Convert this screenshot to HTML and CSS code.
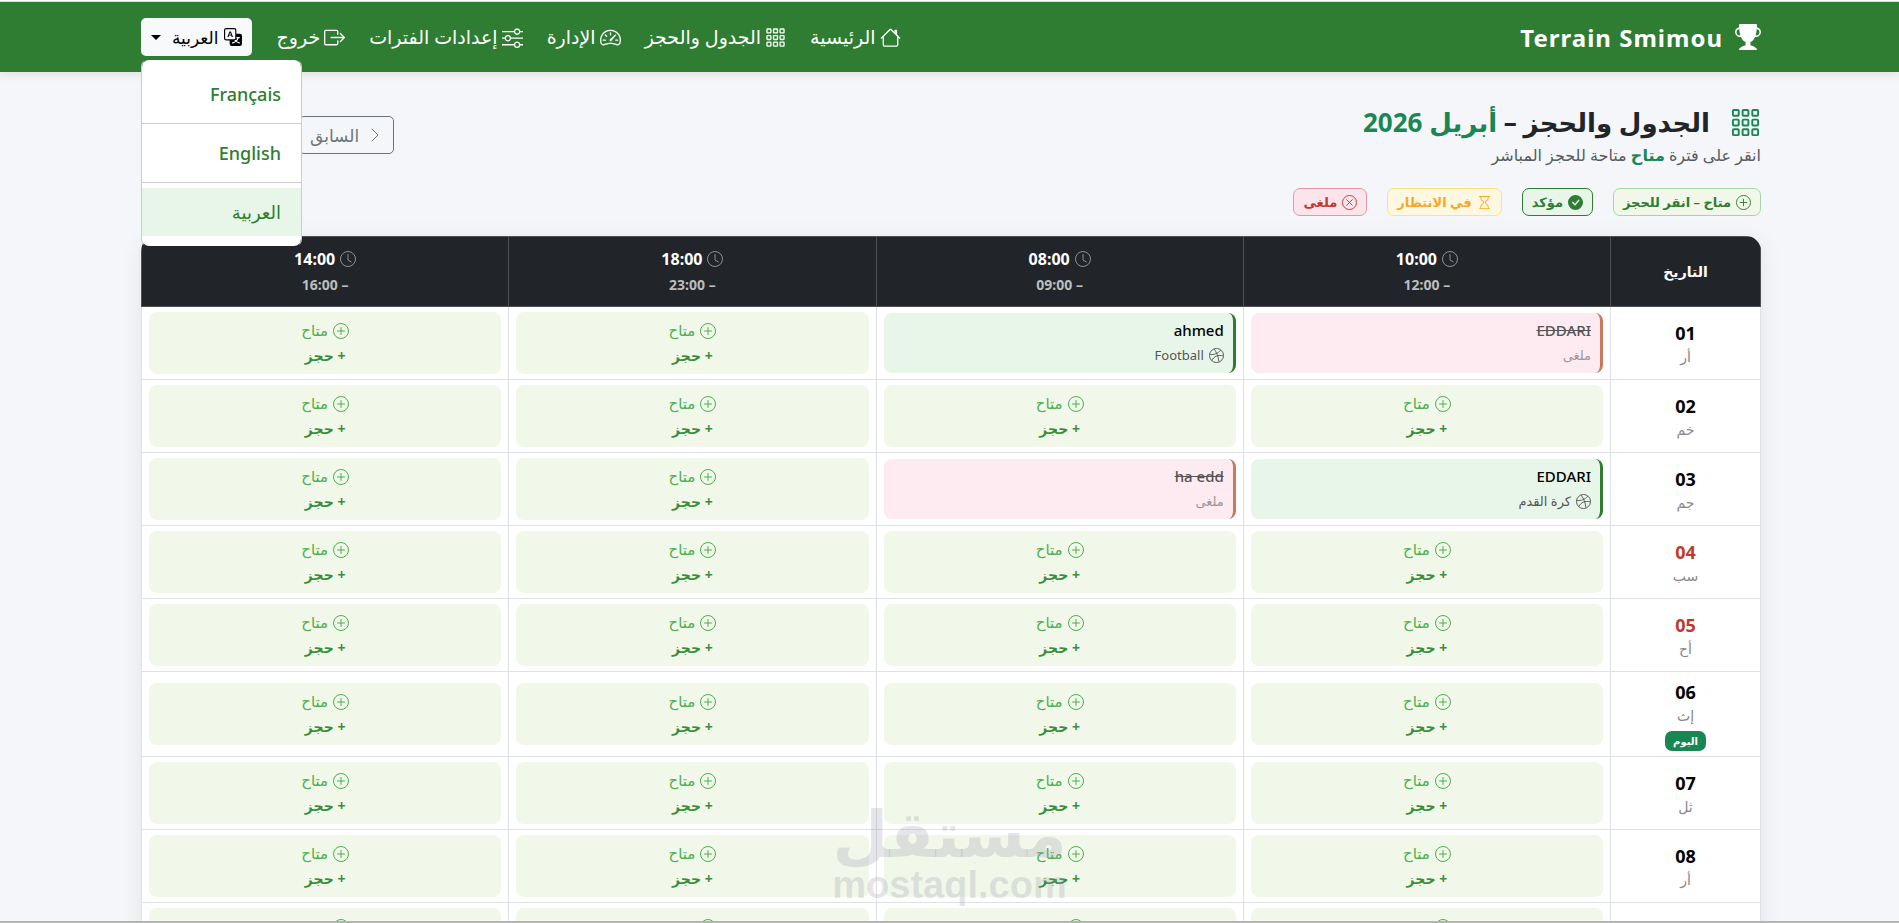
FILE: index.html
```html
<!DOCTYPE html>
<html lang="ar" dir="rtl">
<head>
    <meta charset="UTF-8">
    <meta name="viewport" content="width=device-width, initial-scale=1.0">
    <title>الجدول والحجز | Terrain Smimou</title>
    <link rel="stylesheet" href="styles.css">
</head>
<body>
    <!-- Icon set -->
    <svg class="sprite" aria-hidden="true">
        <symbol id="i-trophy" viewBox="0 0 16 16"><path d="M2.5.5A.5.5 0 0 1 3 0h10a.5.5 0 0 1 .5.5q0 .807-.034 1.536a3 3 0 1 1-1.133 5.89c-.79 1.865-1.878 2.777-2.833 3.011v2.173l1.425.356c.194.048.377.135.537.255L13.3 15.1a.5.5 0 0 1-.3.9H3a.5.5 0 0 1-.3-.9l1.838-1.379c.16-.12.343-.207.537-.255L6.5 13.11v-2.173c-.955-.234-2.043-1.146-2.833-3.012a3 3 0 1 1-1.132-5.89A33 33 0 0 1 2.5.5m.099 2.54a2 2 0 0 0 .72 3.935c-.333-1.05-.588-2.346-.72-3.935m10.083 3.935a2 2 0 0 0 .72-3.935c-.133 1.59-.388 2.885-.72 3.935"/></symbol>
        <symbol id="i-house" viewBox="0 0 16 16"><path fill-rule="evenodd" d="M8.707 1.5a1 1 0 0 0-1.414 0L.646 8.146a.5.5 0 0 0 .708.708L2 8.207V13.5A1.5 1.5 0 0 0 3.5 15h9a1.5 1.5 0 0 0 1.5-1.5V8.207l.646.647a.5.5 0 0 0 .708-.708L13 5.793V2.5a.5.5 0 0 0-.5-.5h-1a.5.5 0 0 0-.5.5v1.293zM13 7.207V13.5a.5.5 0 0 1-.5.5h-9a.5.5 0 0 1-.5-.5V7.207l5-5z"/></symbol>
        <symbol id="i-grid" viewBox="0 0 16 16">
            <g fill="none" stroke="currentColor">
                <rect x="1.5" y="1.5" width="3" height="3" rx=".5"/><rect x="6.5" y="1.5" width="3" height="3" rx=".5"/><rect x="11.5" y="1.5" width="3" height="3" rx=".5"/>
                <rect x="1.5" y="6.5" width="3" height="3" rx=".5"/><rect x="6.5" y="6.5" width="3" height="3" rx=".5"/><rect x="11.5" y="6.5" width="3" height="3" rx=".5"/>
                <rect x="1.5" y="11.5" width="3" height="3" rx=".5"/><rect x="6.5" y="11.5" width="3" height="3" rx=".5"/><rect x="11.5" y="11.5" width="3" height="3" rx=".5"/>
            </g>
        </symbol>
        <symbol id="i-speed" viewBox="0 0 16 16"><path d="M8 4a.5.5 0 0 1 .5.5V6a.5.5 0 0 1-1 0V4.5A.5.5 0 0 1 8 4M3.732 5.732a.5.5 0 0 1 .707 0l.915.914a.5.5 0 1 1-.708.708l-.914-.915a.5.5 0 0 1 0-.707M2 10a.5.5 0 0 1 .5-.5h1.586a.5.5 0 0 1 0 1H2.5A.5.5 0 0 1 2 10m9.5 0a.5.5 0 0 1 .5-.5h1.5a.5.5 0 0 1 0 1H12a.5.5 0 0 1-.5-.5m.754-4.246a.39.39 0 0 0-.527-.02L7.547 9.31a.91.91 0 1 0 1.302 1.258l3.434-4.297a.39.39 0 0 0-.029-.518z"/><path fill-rule="evenodd" d="M0 10a8 8 0 1 1 15.547 2.661c-.442 1.253-1.845 1.602-2.932 1.25C11.309 13.488 9.475 13 8 13c-1.474 0-3.31.488-4.615.911-1.087.352-2.49.003-2.932-1.25A8 8 0 0 1 0 10m8-7a7 7 0 0 0-6.603 9.329c.203.575.923.876 1.68.63C4.397 12.533 6.358 12 8 12s3.604.532 4.923.96c.757.245 1.477-.056 1.68-.631A7 7 0 0 0 8 3"/></symbol>
        <symbol id="i-sliders" viewBox="0 0 16 16"><path fill-rule="evenodd" d="M11.5 2a1.5 1.5 0 1 0 0 3 1.5 1.5 0 0 0 0-3M9.05 3a2.5 2.5 0 0 1 4.9 0H16v1h-2.05a2.5 2.5 0 0 1-4.9 0H0V3zM4.5 7a1.5 1.5 0 1 0 0 3 1.5 1.5 0 0 0 0-3M2.05 8a2.5 2.5 0 0 1 4.9 0H16v1H6.95a2.5 2.5 0 0 1-4.9 0H0V8zm9.45 4a1.5 1.5 0 1 0 0 3 1.5 1.5 0 0 0 0-3m-2.45 1a2.5 2.5 0 0 1 4.9 0H16v1h-2.05a2.5 2.5 0 0 1-4.9 0H0v-1z"/></symbol>
        <symbol id="i-exit" viewBox="0 0 16 16"><path d="M10 12.5a.5.5 0 0 1-.5.5h-8a.5.5 0 0 1-.5-.5v-9a.5.5 0 0 1 .5-.5h8a.5.5 0 0 1 .5.5v2a.5.5 0 0 0 1 0v-2A1.5 1.5 0 0 0 9.5 2h-8A1.5 1.5 0 0 0 0 3.5v9A1.5 1.5 0 0 0 1.5 14h8a1.5 1.5 0 0 0 1.5-1.5v-2a.5.5 0 0 0-1 0z"/><path d="M15.854 8.354a.5.5 0 0 0 0-.708l-3-3a.5.5 0 0 0-.708.708L14.293 7.5H5.5a.5.5 0 0 0 0 1h8.793l-2.147 2.146a.5.5 0 0 0 .708.708z"/></symbol>
        <symbol id="i-translate" viewBox="0 0 16 16"><path fill-rule="evenodd" d="M4.545 6.714 4.11 8H3l1.862-5h1.284L8 8H6.833l-.435-1.286zm1.634-.736L5.5 3.956h-.049l-.679 2.022z"/><path fill-rule="evenodd" d="M0 2a2 2 0 0 1 2-2h7a2 2 0 0 1 2 2v3h3a2 2 0 0 1 2 2v7a2 2 0 0 1-2 2H7a2 2 0 0 1-2-2v-3H2a2 2 0 0 1-2-2zm2-1a1 1 0 0 0-1 1v7a1 1 0 0 0 1 1h7a1 1 0 0 0 1-1V2a1 1 0 0 0-1-1z"/><path fill="none" stroke="#fff" stroke-width="1.1" d="M7.2 13.4c2.8-.7 4.7-2.2 5.5-4.8M14 13.5c-2.2-.5-3.5-1.5-4.3-2.8M11 8.5h3"/></symbol>
        <symbol id="i-plus" viewBox="0 0 16 16"><path fill="none" stroke="currentColor" stroke-linecap="round" d="M8 4.5v7M4.5 8h7"/><circle cx="8" cy="8" r="7.5" fill="none" stroke="currentColor"/></symbol>
        <symbol id="i-check" viewBox="0 0 16 16"><path fill-rule="evenodd" d="M16 8A8 8 0 1 1 0 8a8 8 0 0 1 16 0m-3.97-3.03a.75.75 0 0 0-1.08.022L7.477 9.417 5.384 7.323a.75.75 0 0 0-1.06 1.06L6.97 11.03a.75.75 0 0 0 1.079-.02l3.992-4.99a.75.75 0 0 0-.01-1.05z"/></symbol>
        <symbol id="i-glass" viewBox="0 0 16 16"><path fill-rule="evenodd" d="M2 1.5a.5.5 0 0 1 .5-.5h11a.5.5 0 0 1 0 1h-1v1a4.5 4.5 0 0 1-2.557 4.06c-.29.139-.443.377-.443.59v.7c0 .213.154.451.443.59A4.5 4.5 0 0 1 12.5 13v1h1a.5.5 0 0 1 0 1h-11a.5.5 0 1 1 0-1h1v-1a4.5 4.5 0 0 1 2.557-4.06c.29-.139.443-.377.443-.59v-.7c0-.213-.154-.451-.443-.59A4.5 4.5 0 0 1 3.5 3V2h-1a.5.5 0 0 1-.5-.5m2.5.5v1a3.5 3.5 0 0 0 1.989 3.158c.533.256 1.011.791 1.011 1.491v.702c0 .7-.478 1.235-1.011 1.491A3.5 3.5 0 0 0 4.5 13v1h7v-1a3.5 3.5 0 0 0-1.989-3.158C8.978 9.586 8.5 9.052 8.5 8.351v-.702c0-.7.478-1.235 1.011-1.491A3.5 3.5 0 0 0 11.5 3V2z"/></symbol>
        <symbol id="i-x" viewBox="0 0 16 16"><path fill="none" stroke="currentColor" stroke-linecap="round" d="m5 5 6 6M11 5l-6 6"/><circle cx="8" cy="8" r="7.5" fill="none" stroke="currentColor"/></symbol>
        <symbol id="i-clock" viewBox="0 0 16 16"><path fill="none" stroke="currentColor" stroke-linecap="round" d="M8 3.5V9l3.200 1.900"/><circle cx="8" cy="8" r="7.5" fill="none" stroke="currentColor"/></symbol>
        <symbol id="i-ball" viewBox="0 0 16 16"><g fill="none" stroke="currentColor"><circle cx="8" cy="8" r="7.5"/><path d="M5.3 1.1c2.9 3.600 4.600 7.800 5.300 13.400M.6 7c4.900.2 9-.9 11.900-4.700M3 13.400c2.200-4.400 6.400-6.500 12.400-5"/></g></symbol>
        <symbol id="i-chevron" viewBox="0 0 16 16"><path fill="none" stroke="currentColor" stroke-linecap="round" stroke-linejoin="round" d="m5 2 6 6-6 6"/></symbol>
    </svg>

    <div class="screen">
        <nav class="navbar">
            <div class="container navbar-inner">
                <a class="brand" href="#"><svg class="icon"><use href="#i-trophy"/></svg><span>Terrain Smimou</span></a>
                <div class="nav-links">
                    <a href="#"><svg class="icon"><use href="#i-house"/></svg>الرئيسية</a>
                    <a href="#"><svg class="icon"><use href="#i-grid"/></svg>الجدول والحجز</a>
                    <a href="#"><svg class="icon"><use href="#i-speed"/></svg>الإدارة</a>
                    <a href="#"><svg class="icon"><use href="#i-sliders"/></svg>إعدادات الفترات</a>
                    <a href="#"><svg class="icon"><use href="#i-exit"/></svg>خروج</a>
                    <div class="lang">
                        <button class="lang-btn" type="button" aria-expanded="true"><svg class="icon"><use href="#i-translate"/></svg>العربية<span class="caret"></span></button>
                        <div class="lang-menu">
                            <a href="#" lang="fr">Français</a>
                            <hr>
                            <a href="#" lang="en">English</a>
                            <hr>
                            <a href="#" class="active">العربية</a>
                        </div>
                    </div>
                </div>
            </div>
        </nav>

        <main class="container">
            <header class="page-head">
                <div>
                    <h1><svg class="icon"><use href="#i-grid"/></svg><span>الجدول والحجز – <span class="month">أبريل 2026</span></span></h1>
                    <p>انقر على فترة <strong>متاح</strong> متاحة للحجز المباشر</p>
                </div>
                <div class="month-nav">
                    <button type="button"><svg class="icon"><use href="#i-chevron"/></svg>السابق</button>
                    <button type="button" class="next" aria-label="التالي"><svg class="icon flip"><use href="#i-chevron"/></svg></button>
                </div>
            </header>

            <div class="legend">
                <span class="tag tag-free"><svg class="icon"><use href="#i-plus"/></svg>متاح – انقر للحجز</span>
                <span class="tag tag-ok"><svg class="icon"><use href="#i-check"/></svg>مؤكد</span>
                <span class="tag tag-wait"><svg class="icon"><use href="#i-glass"/></svg>في الانتظار</span>
                <span class="tag tag-off"><svg class="icon"><use href="#i-x"/></svg>ملغى</span>
            </div>

            <div class="table-wrap">
                <table>
                    <thead>
                        <tr>
                            <th class="col-date">التاريخ</th>
                            <th><div class="from"><svg class="icon"><use href="#i-clock"/></svg>10:00</div><div class="to">– 12:00</div></th>
                            <th><div class="from"><svg class="icon"><use href="#i-clock"/></svg>08:00</div><div class="to">– 09:00</div></th>
                            <th><div class="from"><svg class="icon"><use href="#i-clock"/></svg>18:00</div><div class="to">– 23:00</div></th>
                            <th><div class="from"><svg class="icon"><use href="#i-clock"/></svg>14:00</div><div class="to">– 16:00</div></th>
                        </tr>
                    </thead>
                    <tbody>
                        <tr>
                            <td class="date"><b>01</b><small>أر</small></td>
                            <td><div class="slot off"><b>EDDARI</b><small>ملغى</small></div></td>
                            <td><div class="slot ok"><b>ahmed</b><small><svg class="icon"><use href="#i-ball"/></svg>Football</small></div></td>
                            <td><a class="slot free" href="#"><span><svg class="icon"><use href="#i-plus"/></svg>متاح</span><b>+ حجز</b></a></td>
                            <td><a class="slot free" href="#"><span><svg class="icon"><use href="#i-plus"/></svg>متاح</span><b>+ حجز</b></a></td>
                        </tr>
                        <tr>
                            <td class="date"><b>02</b><small>خم</small></td>
                            <td><a class="slot free" href="#"><span><svg class="icon"><use href="#i-plus"/></svg>متاح</span><b>+ حجز</b></a></td>
                            <td><a class="slot free" href="#"><span><svg class="icon"><use href="#i-plus"/></svg>متاح</span><b>+ حجز</b></a></td>
                            <td><a class="slot free" href="#"><span><svg class="icon"><use href="#i-plus"/></svg>متاح</span><b>+ حجز</b></a></td>
                            <td><a class="slot free" href="#"><span><svg class="icon"><use href="#i-plus"/></svg>متاح</span><b>+ حجز</b></a></td>
                        </tr>
                        <tr>
                            <td class="date"><b>03</b><small>جم</small></td>
                            <td><div class="slot ok"><b>EDDARI</b><small><svg class="icon"><use href="#i-ball"/></svg>كرة القدم</small></div></td>
                            <td><div class="slot off"><b>ha edd</b><small>ملغى</small></div></td>
                            <td><a class="slot free" href="#"><span><svg class="icon"><use href="#i-plus"/></svg>متاح</span><b>+ حجز</b></a></td>
                            <td><a class="slot free" href="#"><span><svg class="icon"><use href="#i-plus"/></svg>متاح</span><b>+ حجز</b></a></td>
                        </tr>
                        <tr>
                            <td class="date weekend"><b>04</b><small>سب</small></td>
                            <td><a class="slot free" href="#"><span><svg class="icon"><use href="#i-plus"/></svg>متاح</span><b>+ حجز</b></a></td>
                            <td><a class="slot free" href="#"><span><svg class="icon"><use href="#i-plus"/></svg>متاح</span><b>+ حجز</b></a></td>
                            <td><a class="slot free" href="#"><span><svg class="icon"><use href="#i-plus"/></svg>متاح</span><b>+ حجز</b></a></td>
                            <td><a class="slot free" href="#"><span><svg class="icon"><use href="#i-plus"/></svg>متاح</span><b>+ حجز</b></a></td>
                        </tr>
                        <tr>
                            <td class="date weekend"><b>05</b><small>أح</small></td>
                            <td><a class="slot free" href="#"><span><svg class="icon"><use href="#i-plus"/></svg>متاح</span><b>+ حجز</b></a></td>
                            <td><a class="slot free" href="#"><span><svg class="icon"><use href="#i-plus"/></svg>متاح</span><b>+ حجز</b></a></td>
                            <td><a class="slot free" href="#"><span><svg class="icon"><use href="#i-plus"/></svg>متاح</span><b>+ حجز</b></a></td>
                            <td><a class="slot free" href="#"><span><svg class="icon"><use href="#i-plus"/></svg>متاح</span><b>+ حجز</b></a></td>
                        </tr>
                        <tr>
                            <td class="date"><b>06</b><small>إث</small><span class="today">اليوم</span></td>
                            <td><a class="slot free" href="#"><span><svg class="icon"><use href="#i-plus"/></svg>متاح</span><b>+ حجز</b></a></td>
                            <td><a class="slot free" href="#"><span><svg class="icon"><use href="#i-plus"/></svg>متاح</span><b>+ حجز</b></a></td>
                            <td><a class="slot free" href="#"><span><svg class="icon"><use href="#i-plus"/></svg>متاح</span><b>+ حجز</b></a></td>
                            <td><a class="slot free" href="#"><span><svg class="icon"><use href="#i-plus"/></svg>متاح</span><b>+ حجز</b></a></td>
                        </tr>
                        <tr>
                            <td class="date"><b>07</b><small>ثل</small></td>
                            <td><a class="slot free" href="#"><span><svg class="icon"><use href="#i-plus"/></svg>متاح</span><b>+ حجز</b></a></td>
                            <td><a class="slot free" href="#"><span><svg class="icon"><use href="#i-plus"/></svg>متاح</span><b>+ حجز</b></a></td>
                            <td><a class="slot free" href="#"><span><svg class="icon"><use href="#i-plus"/></svg>متاح</span><b>+ حجز</b></a></td>
                            <td><a class="slot free" href="#"><span><svg class="icon"><use href="#i-plus"/></svg>متاح</span><b>+ حجز</b></a></td>
                        </tr>
                        <tr>
                            <td class="date"><b>08</b><small>أر</small></td>
                            <td><a class="slot free" href="#"><span><svg class="icon"><use href="#i-plus"/></svg>متاح</span><b>+ حجز</b></a></td>
                            <td><a class="slot free" href="#"><span><svg class="icon"><use href="#i-plus"/></svg>متاح</span><b>+ حجز</b></a></td>
                            <td><a class="slot free" href="#"><span><svg class="icon"><use href="#i-plus"/></svg>متاح</span><b>+ حجز</b></a></td>
                            <td><a class="slot free" href="#"><span><svg class="icon"><use href="#i-plus"/></svg>متاح</span><b>+ حجز</b></a></td>
                        </tr>
                        <tr>
                            <td class="date"><b>09</b><small>خم</small></td>
                            <td><a class="slot free" href="#"><span><svg class="icon"><use href="#i-plus"/></svg>متاح</span><b>+ حجز</b></a></td>
                            <td><a class="slot free" href="#"><span><svg class="icon"><use href="#i-plus"/></svg>متاح</span><b>+ حجز</b></a></td>
                            <td><a class="slot free" href="#"><span><svg class="icon"><use href="#i-plus"/></svg>متاح</span><b>+ حجز</b></a></td>
                            <td><a class="slot free" href="#"><span><svg class="icon"><use href="#i-plus"/></svg>متاح</span><b>+ حجز</b></a></td>
                        </tr>
                    </tbody>
                </table>
            </div>
        </main>

        <div class="watermark">
            <div class="wm-ar">مستقل</div>
            <div class="wm-en">mostaql.com</div>
        </div>
    </div>
</body>
</html>
```
FILE: styles.css
```css
:root {
    --green: #2e7d32;
    --accent: #198754;
    --dark: #212529;
    --line: #dee2e6;
}
* {
    box-sizing: border-box;
}
body {
    margin: 0;
    font-family: 'Segoe UI', 'Noto Sans', 'DejaVu Sans', sans-serif;
    font-size: 16px;
    color: var(--dark);
    background: #f4f6fa;
}
a {
    text-decoration: none;
    color: inherit;
}
button {
    font-family: inherit;
    cursor: pointer;
}
.sprite {
    position: absolute;
    width: 0;
    height: 0;
}
.icon {
    width: 16px;
    height: 16px;
    fill: currentColor;
    flex: none;
}
.screen {
    position: relative;
    height: 100vh;
    overflow: hidden;
    border-top: 1px solid #fff;
    border-bottom: 2px solid #b4b4b4;
}
.container {
    max-width: 1623px;
    margin: 0 auto;
    padding-left: 3px;
}

/* navbar */
.navbar {
    background: var(--green);
    border-top: 1px solid #dcdcdc;
    box-shadow: 0 2px 10px rgba(0,0,0,0.1);
    color: #fff;
}
.navbar-inner {
    height: 70px;
    display: flex;
    align-items: center;
    justify-content: space-between;
}
.brand {
    display: flex;
    align-items: center;
    gap: 12px;
    font-size: 24px;
    font-weight: 700;
    letter-spacing: 1px;
}
.brand .icon {
    width: 26px;
    height: 26px;
}
.nav-links {
    display: flex;
    align-items: center;
    gap: 24px;
    font-size: 19px;
    font-weight: 500;
}
.nav-links > a {
    display: flex;
    align-items: center;
    gap: 4px;
}
.nav-links > a .icon {
    width: 21px;
    height: 21px;
}
.lang {
    position: relative;
}
.lang-btn {
    display: flex;
    align-items: center;
    gap: 6px;
    height: 38px;
    padding: 0 10px;
    border: 0;
    border-radius: 5px;
    background: #f8f9fa;
    color: #000;
    font-size: 17px;
}
.lang-btn .icon {
    width: 18px;
    height: 18px;
}
.caret {
    margin-right: 5px;
    border-top: 5px solid;
    border-left: 5px solid transparent;
    border-right: 5px solid transparent;
}
.lang-menu {
    position: absolute;
    top: 41px;
    left: 0;
    z-index: 10;
    width: 161px;
    padding: 10px 0;
    border: 1px solid #ccc;
    border-color: transparent #ccc;
    border-radius: 8px;
    background: #fff;
    background-clip: padding-box;
    color: var(--green);
    font-size: 18px;
    line-height: 48px;
}
.lang-menu a {
    display: block;
    padding: 0 20px;
}
.lang-menu a.active {
    background: #e8f5e9;
}
.lang-menu hr {
    margin: 5px 0;
    border: 0;
    border-top: 1px solid #ccc;
}

/* title row */
.page-head {
    display: flex;
    justify-content: space-between;
    align-items: center;
    margin: 30px 0 20px;
}
.page-head h1 {
    display: flex;
    align-items: center;
    gap: 20px;
    margin: 0;
    font-size: 26px;
    line-height: 40px;
    font-weight: 700;
}
.page-head h1 .icon {
    width: 31px;
    height: 31px;
    color: var(--accent);
}
.month,
.page-head strong {
    color: var(--accent);
}
.page-head p {
    margin: 0;
    font-size: 16px;
    line-height: 26px;
    color: #565b60;
}
.month-nav {
    display: flex;
    gap: 8px;
}
.month-nav button {
    display: flex;
    align-items: center;
    gap: 8px;
    height: 38px;
    padding: 0 10px;
    border: 1px solid #6c757d;
    border-radius: 5px;
    background: none;
    color: #6c757d;
    font-size: 17px;
}
.month-nav .next {
    width: 150px;
    justify-content: center;
}
.flip {
    transform: scaleX(-1);
}

/* legend */
.legend {
    display: flex;
    gap: 20px;
    margin-bottom: 20px;
}
.tag {
    display: flex;
    align-items: center;
    gap: 5px;
    height: 28px;
    padding: 0 9px;
    border: 1px solid;
    border-radius: 7px;
    font-size: 13px;
    font-weight: 600;
}
.tag .icon {
    width: 15px;
    height: 15px;
}
.tag-free {
    background: #f1f8e9;
    border-color: #a5d6a7;
    color: var(--green);
}
.tag-ok {
    background: #e8f5e9;
    border-color: var(--green);
    color: var(--green);
}
.tag-wait {
    background: #fff8e1;
    border-color: #ffe082;
    color: #f9a825;
}
.tag-off {
    background: #fce4ec;
    border-color: #e39a9a;
    color: #c0392b;
}

/* schedule */
.table-wrap {
    border-radius: 15px;
    overflow: hidden;
    background: #fff;
    box-shadow: 0 5px 25px rgba(0,0,0,0.08);
}
table {
    width: 100%;
    border-collapse: collapse;
    table-layout: fixed;
    text-align: center;
}
th {
    height: 70px;
    padding: 0;
    background: var(--dark);
    border: 1px solid #4d5154;
    color: #fff;
    font-size: 14px;
}
.col-date {
    width: 150px;
}
.from,
.to {
    display: flex;
    align-items: center;
    justify-content: center;
    gap: 5px;
    line-height: 25px;
    font-size: 16px;
}
.from .icon {
    color: #8e9193;
}
.to {
    font-size: 14px;
    color: #bcbdbe;
}
td {
    padding: 5px 7px;
    border: 1px solid var(--line);
}
.date {
    padding-top: 8px;
}
.date b,
.date small {
    display: block;
    line-height: 24px;
}
.date b {
    font-size: 18px;
    color: #000;
}
.date small {
    font-size: 14px;
    color: #888;
}
.date.weekend b {
    color: #c0392b;
}
.today {
    display: inline-block;
    padding: 0 8px;
    border-radius: 7px;
    background: var(--accent);
    color: #fff;
    font-size: 10px;
    font-weight: 700;
    line-height: 20px;
}
.slot {
    display: flex;
    flex-direction: column;
    justify-content: center;
    height: 62px;
    border-radius: 8px;
    line-height: 25px;
    font-size: 15px;
}
.slot span,
.slot small {
    display: flex;
    align-items: center;
    gap: 5px;
}
.slot.free {
    align-items: center;
    background: #f1f8e9;
    color: #4caf50;
}
.slot.free b {
    font-size: 14px;
    color: #388e3c;
}
.slot.ok,
.slot.off {
    align-items: flex-start;
    height: 60px;
    padding: 0 9px;
    border-right: 3px solid var(--green);
    background: #e8f5e9;
    color: #000;
}
.slot.ok b,
.slot.off b {
    font-weight: 500;
}
.slot small {
    font-size: 13px;
    color: #555;
}
.slot small .icon {
    width: 15px;
    height: 15px;
}
.slot.off {
    background: #fdebf1;
    border-color: #c97a5c;
}
.slot.off b {
    color: #555;
    text-decoration: line-through;
}
.slot.off small {
    color: #999;
}

/* watermark */
.watermark {
    position: absolute;
    bottom: 16px;
    left: 0;
    right: 0;
    text-align: center;
    font-weight: 700;
    color: rgba(150,150,170,0.25);
    pointer-events: none;
}
.wm-ar {
    font-size: 64px;
    line-height: 64px;
}
.wm-en {
    font-family: 'Liberation Sans', sans-serif;
    font-size: 38px;
    line-height: 40px;
}
```
